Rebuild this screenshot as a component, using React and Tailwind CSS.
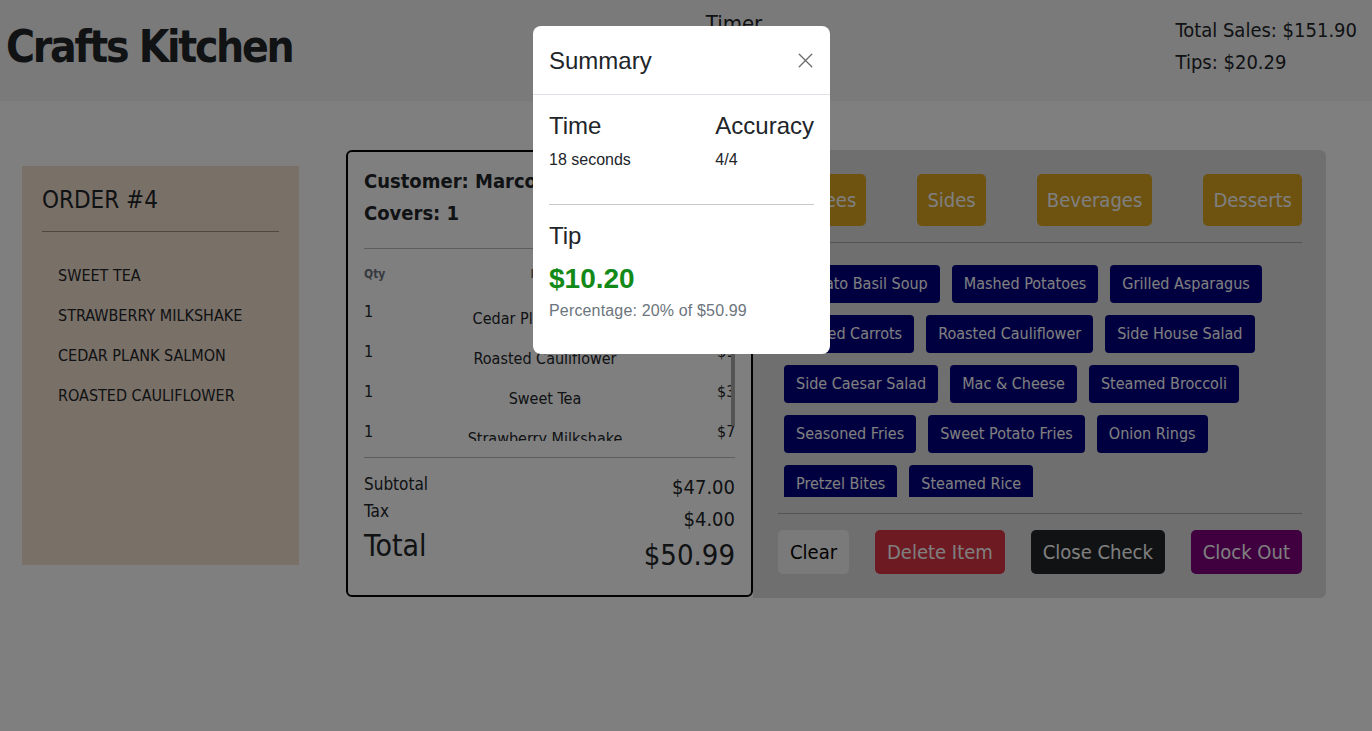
import { X } from "lucide-react";

// --- Data ---
const orderItems = ["SWEET TEA", "STRAWBERRY MILKSHAKE", "CEDAR PLANK SALMON", "ROASTED CAULIFLOWER"];

const checkRows = [
  { qty: 1, name: "Cedar Plank Salmon", price: "$28.00" },
  { qty: 1, name: "Roasted Cauliflower", price: "$9.00" },
  { qty: 1, name: "Sweet Tea", price: "$3.00" },
  { qty: 1, name: "Strawberry Milkshake", price: "$7.00" },
];

const categories = ["Entrees", "Sides", "Beverages", "Desserts"];

const sides = [
  "Tomato Basil Soup",
  "Mashed Potatoes",
  "Grilled Asparagus",
  "Glazed Carrots",
  "Roasted Cauliflower",
  "Side House Salad",
  "Side Caesar Salad",
  "Mac & Cheese",
  "Steamed Broccoli",
  "Seasoned Fries",
  "Sweet Potato Fries",
  "Onion Rings",
  "Pretzel Bites",
  "Steamed Rice",
];

function Header() {
  return (
    <header className="h-[101px] bg-[#f4f4f4] flex justify-between items-start pl-[6px] pr-[15px] text-[#212529]">
      <h1 className="mt-[25px] text-[44px] leading-[44px] font-bold tracking-[-2.3px]">Crafts Kitchen</h1>
      <div className="mt-[11px] text-[22px] leading-[26px] text-center">
        <div>Timer</div>
        <div>00:18</div>
      </div>
      <div className="mt-[14px] text-[20px] leading-[32px]">
        <div>Total Sales: $151.90</div>
        <div>Tips: $20.29</div>
      </div>
    </header>
  );
}

function OrderTicket() {
  return (
    <div className="mt-[16px] w-[277px] h-[399px] bg-[#f3e0d0] px-[20px] pt-[20px] text-[#212529]">
      <h2 className="text-[24px] leading-[29px]">ORDER #4</h2>
      <hr className="mt-[16px] border-t border-[#9c8f84]" />
      <ul className="mt-[24px] pl-[16px]">
        {orderItems.map((item) => (
          <li key={item} className="text-[16px] leading-[40px]">{item}</li>
        ))}
      </ul>
    </div>
  );
}

function Check() {
  return (
    <div className="ml-[47px] w-[407px] h-[447px] border-2 border-black rounded-[6px] bg-white px-[16px] pt-[13px] text-[#212529]">
      <div className="text-[20px] leading-[32px] font-bold">
        <div className="whitespace-nowrap">Customer: Marco</div>
        <div>Covers: 1</div>
      </div>
      <hr className="mt-[19px] border-t border-[#bdbdbd]" />

      {/* lista scroll */}
      <div className="relative h-[192px] overflow-hidden pt-[16px]">
        <div className="flex h-[18px] text-[12px] leading-[18px] font-bold text-[#6c757d]">
          <div className="w-[60px]">Qty</div>
          <div className="w-[242px] pl-[14px] text-center">Item</div>
          <div className="pl-[51px]">Price</div>
        </div>
        <div className="mt-[17px]">
          {checkRows.map((row) => (
            <div key={row.name} className="flex h-[40px] text-[16px] leading-[24px]">
              <div className="w-[60px] shrink-0">{row.qty}</div>
              <div className="w-[242px] shrink-0 text-center pt-[7px]">{row.name}</div>
              <div className="pl-[51px] shrink-0">{row.price}</div>
            </div>
          ))}
        </div>
        <div className="absolute right-[-1px] top-[51px] w-[5px] h-[126px] rounded-full bg-[#a9a9a9]" />
      </div>

      <hr className="mt-[16px] border-t border-[#bdbdbd]" />
      <div className="flex justify-between pt-[13px]">
        <div>
          <div className="text-[17px] leading-[27px]">Subtotal</div>
          <div className="text-[17px] leading-[27px]">Tax</div>
          <div className="text-[30px] leading-[42px]">Total</div>
        </div>
        <div className="text-right">
          <div className="text-[20px] leading-[32px]">$47.00</div>
          <div className="text-[20px] leading-[32px]">$4.00</div>
          <div className="text-[29px] leading-[40px]">$50.99</div>
        </div>
      </div>
    </div>
  );
}

function MenuPanel() {
  return (
    <div className="w-[573px] h-[448px] bg-[#dedede] rounded-r-[6px] pl-[25px] pr-[24px] pt-[24px]">
      <div className="flex justify-between">
        {categories.map((c) => (
          <button key={c} className="h-[52px] px-[10px] rounded-[5px] bg-[#daa520] text-white text-[20px]">
            {c}
          </button>
        ))}
      </div>
      <hr className="mt-[16px] border-t border-[#a6a6a6]" />

      <div className="mt-[22px] h-[232px] overflow-hidden pl-[6px] flex flex-wrap content-start gap-x-[12px] gap-y-[12px]">
        {sides.map((s) => (
          <button key={s} className="h-[38px] px-[12px] rounded-[4px] bg-[#000080] text-white text-[16px] whitespace-nowrap">
            {s}
          </button>
        ))}
      </div>

      <hr className="mt-[16px] border-t border-[#a6a6a6]" />
      <div className="mt-[16px] flex justify-between">
        <button className="h-[44px] px-[12px] rounded-[5px] bg-[#f5f5f5] text-black text-[20px]">Clear</button>
        <button className="h-[44px] px-[12px] rounded-[5px] bg-[#dc3545] text-white text-[20px]">Delete Item</button>
        <button className="h-[44px] px-[12px] rounded-[5px] bg-[#212529] text-white text-[20px]">Close Check</button>
        <button className="h-[44px] px-[12px] rounded-[5px] bg-[#800080] text-white text-[20px]">Clock Out</button>
      </div>
    </div>
  );
}

function SummaryModal() {
  return (
    <div className="fixed inset-0 bg-black/50">
      <div className="absolute left-[533px] top-[26px] w-[297px] rounded-[8px] bg-white text-[#212529] font-['Liberation_Sans',Arial,sans-serif]">
        <div className="h-[69px] px-[16px] flex items-center justify-between border-b border-[#dee2e6]">
          <h5 className="text-[24px] leading-[29px]">Summary</h5>
          <X size={25} strokeWidth={1.3} className="text-[#6c6c6c] mr-[-4px]" />
        </div>
        <div className="px-[16px] pt-[16px] pb-[31px]">
          <div className="flex justify-between">
            <div>
              <h4 className="text-[24px] leading-[29px] mb-[8px]">Time</h4>
              <p className="text-[16px] leading-[24px]">18 seconds</p>
            </div>
            <div>
              <h4 className="text-[24px] leading-[29px] mb-[8px]">Accuracy</h4>
              <p className="text-[16px] leading-[24px]">4/4</p>
            </div>
          </div>
          <hr className="mt-[32px] mb-[16px] border-t border-[#c8c8c8]" />
          <h4 className="text-[24px] leading-[29px] mb-[12px]">Tip</h4>
          <div className="text-[28px] leading-[34px] font-bold text-[#138a17]">$10.20</div>
          <p className="mt-[3px] text-[16px] leading-[24px] text-[#6c757d] tracking-[0.01em]">Percentage: 20% of $50.99</p>
        </div>
      </div>
    </div>
  );
}

export default function App() {
  return (
    <div className="min-h-[731px] bg-white font-['DejaVu_Sans_Condensed','DejaVu_Sans',sans-serif]">
      <Header />
      <main className="flex items-start pl-[22px] pt-[49px]">
        <OrderTicket />
        <Check />
        <MenuPanel />
      </main>
      <SummaryModal />
    </div>
  );
}
